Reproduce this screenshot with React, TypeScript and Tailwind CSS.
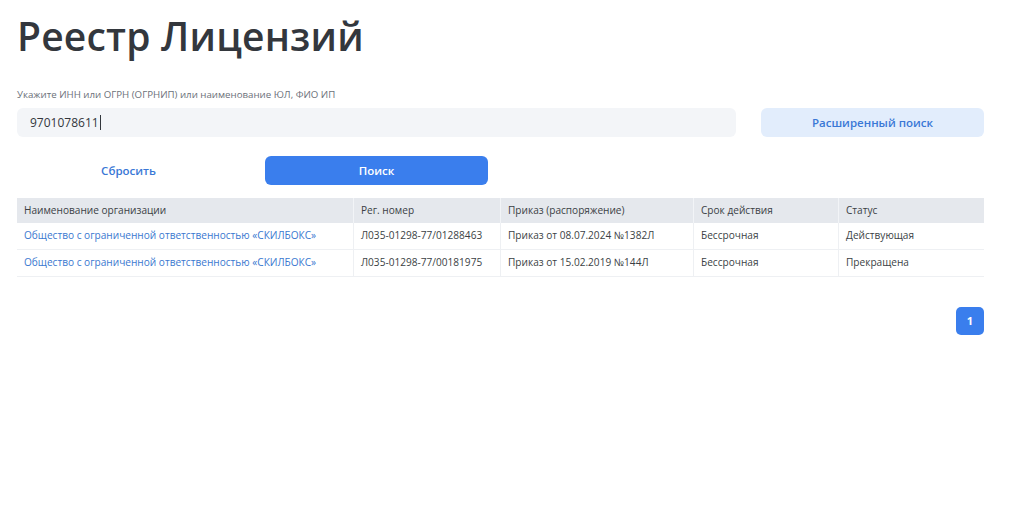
import React from "react";

const rows = [
  {
    name: "Общество с ограниченной ответственностью «СКИЛБОКС»",
    reg: "Л035-01298-77/01288463",
    order: "Приказ от 08.07.2024 №1382Л",
    term: "Бессрочная",
    status: "Действующая",
  },
  {
    name: "Общество с ограниченной ответственностью «СКИЛБОКС»",
    reg: "Л035-01298-77/00181975",
    order: "Приказ от 15.02.2019 №144Л",
    term: "Бессрочная",
    status: "Прекращена",
  },
];

export default function App() {
  return (
    <div
      className="w-[1024px] h-[509px] bg-white overflow-hidden"
      style={{ fontFamily: '"Open Sans", "Noto Sans", sans-serif' }}
    >
      <div className="pl-[17px] pr-[40px] w-[1024px]">
        <h1 className="pt-[10px] text-[39px] leading-[52px] font-semibold text-[#33373d] tracking-[0.2px]">
          Реестр Лицензий
        </h1>
        <div className="mt-[26px] text-[9.7px] leading-[13px] text-[#6b7079]">
          Укажите ИНН или ОГРН (ОГРНИП) или наименование ЮЛ, ФИО ИП
        </div>
        <div className="mt-[7px] grid grid-cols-4 gap-x-[25px] gap-y-[19px] w-[967px]">
          <div className="col-span-3 h-[29px] rounded-[6px] bg-[#f3f5f8] flex items-center pl-[13px] text-[12px] text-[#33373d]">
            9701078611<span className="inline-block w-px h-[15px] bg-[#33373d] ml-px" />
          </div>
          <button className="h-[29px] rounded-[6px] bg-[#e2edfc] text-[#3a78d6] text-[11.5px] font-semibold">
            Расширенный поиск
          </button>
          <button className="h-[29px] rounded-[6px] bg-white text-[#3a78d6] text-[11.5px] font-semibold">
            Сбросить
          </button>
          <button className="h-[29px] rounded-[6px] bg-[#3a7eed] text-white text-[11.5px] font-semibold">
            Поиск
          </button>
        </div>
        <div className="mt-[13px] w-[967px] text-[10.1px] text-[#3b3f45]">
          <div className="grid grid-cols-[336px_147px_193px_145px_146px] bg-[#e5e8ed] h-[25px]">
            <div className="flex items-center pl-[7px]">Наименование организации</div>
            <div className="flex items-center pl-[7px] border-l border-[#f2f4f7]">Рег. номер</div>
            <div className="flex items-center pl-[7px] border-l border-[#f2f4f7]">Приказ (распоряжение)</div>
            <div className="flex items-center pl-[7px] border-l border-[#f2f4f7]">Срок действия</div>
            <div className="flex items-center pl-[7px] border-l border-[#f2f4f7]">Статус</div>
          </div>
          {rows.map((r, i) => (
            <div
              key={i}
              className="grid grid-cols-[336px_147px_193px_145px_146px] h-[27px] border-b border-[#eef0f3]"
            >
              <div className="flex items-center pl-[7px] text-[#3a78d0]">{r.name}</div>
              <div className="flex items-center pl-[7px] border-l border-[#eef0f3]">{r.reg}</div>
              <div className="flex items-center pl-[7px] border-l border-[#eef0f3]">{r.order}</div>
              <div className="flex items-center pl-[7px] border-l border-[#eef0f3]">{r.term}</div>
              <div className="flex items-center pl-[7px] border-l border-[#eef0f3]">{r.status}</div>
            </div>
          ))}
        </div>
        <div className="mt-[30px] w-[967px] flex justify-end">
          <button className="w-[28px] h-[28px] rounded-[5px] bg-[#3a7eed] text-white text-[11px] font-bold">
            1
          </button>
        </div>
      </div>
    </div>
  );
}
